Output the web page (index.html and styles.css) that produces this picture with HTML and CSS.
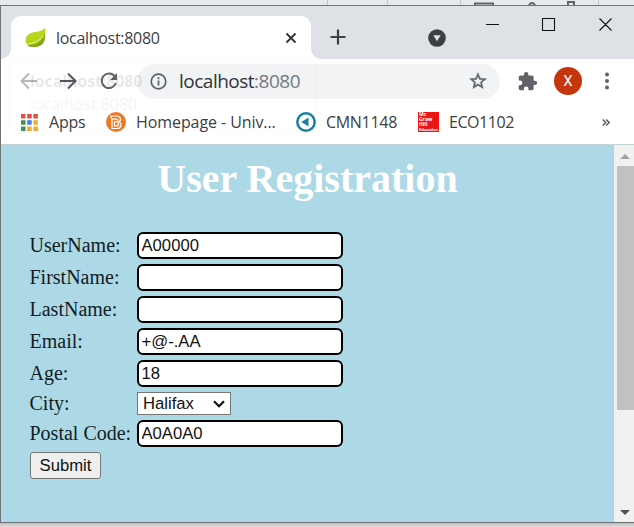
FILE: index.html
```
<!DOCTYPE html>
<html lang="en">
<head>
<meta charset="utf-8">
<title>User Registration</title>
<link rel="stylesheet" href="styles.css">
</head>
<body>
<div class="backdrop-top">
  <svg width="634" height="5" viewBox="0 0 634 5" fill="none"><path d="M327.500 0v5M387.500 0v5M460.500 0v5M598.500 0v5" stroke="#c4c7ca"/><path d="M475 5V3.500h18V5M529 5q3-4 6 0M568 5V2h6v3" stroke="#5f6368" stroke-width="2"/></svg>
</div>
<div class="window">
  <header class="tabs">
    <div class="tab">
      <svg class="leaf" width="22" height="20" viewBox="0 0 22 20"><path d="M20 0C16 5 5 3 2 8c-3 4-1 9 3 10 7 2 14 0 15-7 .5-4 .5-8 0-11z" fill="#b6d51b"/><path d="M2 17c7 0 14-2 18-11 0 8-3 13-10 13-4 0-6 0-8-2z" fill="#7fa91b"/><path d="M3 16c7-1 11-3 15-8" stroke="#e9f58a" fill="none"/></svg>
      <span class="tab-title">localhost:8080</span>
      <svg class="tab-close" width="12" height="12" viewBox="0 0 12 12"><path d="M1.500 1.500l9 9m0-9l-9 9" stroke="#303438" stroke-width="1.900"/></svg>
    </div>
    <svg class="plus" width="16" height="16" viewBox="0 0 16 16"><path d="M8 .5v15M.5 8h15" stroke="#3c4043" stroke-width="2.200"/></svg>
    <svg class="search-tabs" width="18" height="18" viewBox="0 0 18 18"><circle cx="9" cy="9" r="8.800" fill="#3c4043"/><path d="M5.300 6.300h7.400L9 12.300z" fill="#dee1e6"/></svg>
    <svg class="controls" width="127" height="14" viewBox="0 0 127 14" fill="none" stroke="#111" stroke-width="1.100"><path d="M0 6.500h13M56.500.5h12v12h-12zM113.500.5l12 12m0-12l-12 12"/></svg>
  </header>
  <div class="toolbar">
    <svg class="nav" width="100" height="22" viewBox="0 0 100 22" fill="none" stroke-width="2"><path d="M18 11H3m7-7.500L2.500 11l7.500 7.500" stroke="#b4b6b8"/><path d="M41 11h15m-7-7.500l7.500 7.500-7.500 7.500" stroke="#54575b"/><path d="M96 6.500A7.300 7.300 0 1 0 97 13" stroke="#606368"/><path d="M98 3v7h-7z" fill="#606368"/></svg>
    <div class="omnibox">
      <svg width="17" height="17" viewBox="0 0 17 17"><circle cx="8.500" cy="8.500" r="7.300" fill="none" stroke="#5f6368" stroke-width="1.700"/><path d="M8.500 7.500v5M8.500 4.300v1.900" stroke="#5f6368" stroke-width="1.800"/></svg>
      <span class="url">localhost<span class="port">:8080</span></span>
      <svg class="star" width="20" height="20" viewBox="0 0 24 24"><path d="M22 9.240l-7.190-.62L12 2 9.190 8.630 2 9.240l5.460 4.730L5.820 21 12 17.270 18.180 21l-1.630-7.030L22 9.240zM12 15.400l-3.760 2.270 1-4.280-3.320-2.880 4.380-.38L12 6.100l1.710 4.040 4.380.38-3.320 2.880 1 4.280L12 15.400z" fill="#5f6368" stroke="#5f6368" stroke-width=".5"/></svg>
    </div>
    <svg class="puzzle" width="21" height="21" viewBox="0 0 24 24"><path d="M20.500 11H19V7c0-1.100-.9-2-2-2h-4V3.500a2.500 2.500 0 0 0-5 0V5H4c-1.100 0-2 .9-2 2v3.800h1.500a2.700 2.700 0 0 1 0 5.400H2V20c0 1.100.9 2 2 2h3.800v-1.500a2.700 2.700 0 0 1 5.400 0V22H17c1.100 0 2-.9 2-2v-4h1.500a2.500 2.500 0 0 0 0-5z" fill="#5f6368"/></svg>
    <span class="avatar">X</span>
    <svg class="dots" width="4" height="18" viewBox="0 0 4 18" fill="#5f6368"><circle cx="2" cy="2.500" r="2"/><circle cx="2" cy="9" r="2"/><circle cx="2" cy="15.500" r="2"/></svg>
  </div>
  <nav class="bookmarks">
    <div class="mark apps">
      <svg width="17" height="17" viewBox="0 0 17 17"><path d="M0 0h4.500v4.500H0zM6.200 0h4.500v4.500H6.200zM12.400 0h4.500v4.500h-4.500z" fill="#db5147"/><path d="M0 6.200h4.500v4.500H0zM0 12.400h4.500v4.500H0z" fill="#42935a"/><path d="M6.200 6.200h4.500v4.500H6.200z" fill="#3c83ed"/><path d="M12.400 6.200h4.500v4.500h-4.500zM6.200 12.400h4.500v4.500H6.200zM12.400 12.400h4.500v4.500h-4.500z" fill="#ebad38"/></svg>
      <span class="t-apps">Apps</span>
    </div>
    <div class="mark home">
      <svg width="20" height="20" viewBox="0 0 20 20" fill="none"><circle cx="10" cy="10" r="10" fill="#ee7925"/><path d="M4.500 4h6c5 0 5 5 2 6 4 1 3 6.500-1.500 6.500H6V7.200h4.500c2 0 2 2.600 0 2.600H8.400v4h2.800c2 0 2-2.500 0-2.500M4.500 4l1.500 3" stroke="#fff" stroke-width="1.200"/></svg>
      <span class="t-home">Homepage - Univ...</span>
    </div>
    <div class="mark cmn">
      <svg width="20" height="20" viewBox="0 0 20 20"><circle cx="10" cy="10" r="8.700" fill="#fff" stroke="#1b7fa3" stroke-width="2.500"/><path d="M5.300 10l7.200-4.600v9.200z" fill="#1b7fa3"/></svg>
      <span class="t-cmn">CMN1148</span>
    </div>
    <div class="mark eco">
      <span class="mcgraw"><span>Mc</span><span>Graw</span><span>Hill</span><small>Education</small></span>
      <span class="t-eco">ECO1102</span>
    </div>
    <svg class="more" width="8" height="7" viewBox="0 0 8 7"><path d="M.7.5l3 3-3 3M4.200.5l3 3-3 3" fill="none" stroke="#54575b" stroke-width="1.400"/></svg>
  </nav>
  <div class="tooltip"><b>localhost:8080</b><span>localhost:8080</span></div>
  <div class="viewport">
    <main class="page">
      <h1>User Registration</h1>
      <form class="form">
        <label for="user">UserName:</label><input id="user" value="A00000">
        <label for="first">FirstName:</label><input id="first">
        <label for="last">LastName:</label><input id="last">
        <label for="email">Email:</label><input id="email" value="+@-.AA">
        <label for="age">Age:</label><input id="age" value="18">
        <label for="city">City:</label>
        <div class="select" id="city"><span>Halifax</span><svg width="12" height="8" viewBox="0 0 12 8"><path d="M1 1.200l5 5 5-5" fill="none" stroke="#111" stroke-width="2.200"/></svg></div>
        <label for="postal">Postal Code:</label><input id="postal" value="A0A0A0">
        <button type="button">Submit</button>
      </form>
    </main>
    <aside class="scrollbar">
      <svg width="10" height="5" viewBox="0 0 10 5"><path d="M0 5l5-5 5 5z" fill="#a3a3a3"/></svg>
      <div class="thumb"></div>
      <svg class="down" width="10" height="5" viewBox="0 0 10 5"><path d="M0 0l5 5 5-5z" fill="#505050"/></svg>
    </aside>
  </div>
</div>
<div class="backdrop-bottom"></div>
</body>
</html>
```
FILE: styles.css
```
* { box-sizing: border-box; }
body { margin: 0; width: 634px; height: 527px; overflow: hidden; display: flex; flex-direction: column; font-family: "Open Sans", "Noto Sans", sans-serif; color: #3c4043; }
svg { display: block; flex: none; }
.backdrop-top { height: 5px; background: #e7eaea; }
.backdrop-bottom { height: 4px; background: linear-gradient(#bdb8bb, #e3dedf); }
.window { position: relative; height: 518px; border: 1px solid #707377; border-right: 0; display: flex; flex-direction: column; background: #fff; }
.tabs { height: 53px; background: #dee1e6; display: flex; align-items: flex-start; }
.tab { position: relative; width: 300px; height: 43px; margin: 10px 0 0 10px; padding: 0 14px; background: #fff; border-radius: 10px 10px 0 0; display: flex; align-items: center; }
.tab::before, .tab::after { content: ""; position: absolute; bottom: 0; width: 10px; height: 10px; }
.tab::before { left: -10px; background: radial-gradient(circle at 0 0, transparent 9.500px, #fff 10px); }
.tab::after { right: -10px; background: radial-gradient(circle at 100% 0, transparent 9.500px, #fff 10px); }
.tab-title { margin-left: 9px; font-size: 16px; letter-spacing: -0.300px; white-space: nowrap; }
.tab-close { margin-left: auto; }
.plus { margin: 23px 0 0 19px; }
.search-tabs { margin: 23px 0 0 82px; }
.controls { margin: 12px 0 0 40px; }
.toolbar { height: 44px; display: flex; align-items: center; }
.nav { margin-left: 18px; }
.omnibox { width: 363px; height: 35px; margin-left: 18px; padding: 0 12px 0 13px; border-radius: 18px; background: #f1f3f4; display: flex; align-items: center; }
.url { margin-left: 12px; font-size: 19px; letter-spacing: -0.500px; color: #303438; line-height: 26px; }
.port { color: #75797d; }
.star { margin-left: auto; }
.puzzle { margin-left: 17px; }
.avatar { width: 28px; height: 28px; margin-left: 16px; border-radius: 50%; background: #c5360c; color: #fff; display: flex; align-items: center; justify-content: center; font: 15px Roboto, sans-serif; }
.dots { margin-left: 23px; }
.bookmarks { height: 42px; padding-bottom: 3px; border-bottom: 1px solid #c7d5d9; display: flex; align-items: center; font-size: 16px; white-space: nowrap; }
.mark { display: flex; align-items: center; }
.apps { width: 85px; gap: 11px; margin-left: 20px; }
.home { width: 190px; gap: 10px; }
.cmn { width: 122px; gap: 10px; }
.eco { gap: 10px; }
.t-apps { letter-spacing: -0.200px; }
.t-home { letter-spacing: -0.080px; }
.t-cmn { letter-spacing: -0.300px; }
.t-eco { letter-spacing: -0.450px; }
.mcgraw { width: 21px; height: 20px; background: #ed1414; color: #fff; padding: 0 0 0 1px; display: flex; flex-direction: column; font: bold 5px/5px "Open Sans", sans-serif; overflow: hidden; }
.mcgraw small { font-size: 4px; line-height: 5px; letter-spacing: -0.100px; }
.more { margin: 0 24px 0 auto; }
.tooltip { position: absolute; left: 8px; top: 54px; width: 308px; height: 71px; padding: 9px 20px; border: 1px solid rgba(120, 120, 120, .035); border-radius: 7px; display: flex; flex-direction: column; font-size: 16px; line-height: 23px; pointer-events: none; }
.tooltip b { letter-spacing: -0.120px; color: rgba(60, 64, 67, .13); }
.tooltip span { letter-spacing: -0.050px; color: rgba(60, 64, 67, .08); }
.viewport { flex: 1; display: flex; min-height: 0; }
.page { width: 613px; background: #add8e6; font-family: "Liberation Serif", serif; color: #111d24; }
h1 { margin: 11px 0 30px; font-size: 40px; line-height: 46px; text-align: center; color: #fff; }
.form { display: grid; grid-template-columns: 102px 206px; column-gap: 5px; row-gap: 5px; margin-left: 29px; align-items: center; font-size: 20px; white-space: nowrap; }
label { line-height: 23px; margin-left: -0.500px; }
input { width: 206px; height: 27px; padding: 0 2.500px; border: 2px solid #000; border-radius: 6px; background: #fff; font: 16.670px "Liberation Sans", sans-serif; color: #111; }
.select { width: 94px; height: 23px; padding: 0 5px; border: 1px solid #767676; background: #fff; display: flex; align-items: center; justify-content: space-between; font: 16.670px "Liberation Sans", sans-serif; color: #111; }
button { width: 71px; height: 27px; padding: 0; border: 1px solid #767676; border-radius: 3px; background: #efefef; font: 16.670px "Liberation Sans", sans-serif; color: #111; }
.scrollbar { width: 20px; background: #f1f1f1; display: flex; flex-direction: column; align-items: center; padding: 9px 0 7px 2px; }
.thumb { width: 17px; height: 244px; margin-top: 7px; background: #c1c1c1; }
.down { margin-top: auto; }
```
